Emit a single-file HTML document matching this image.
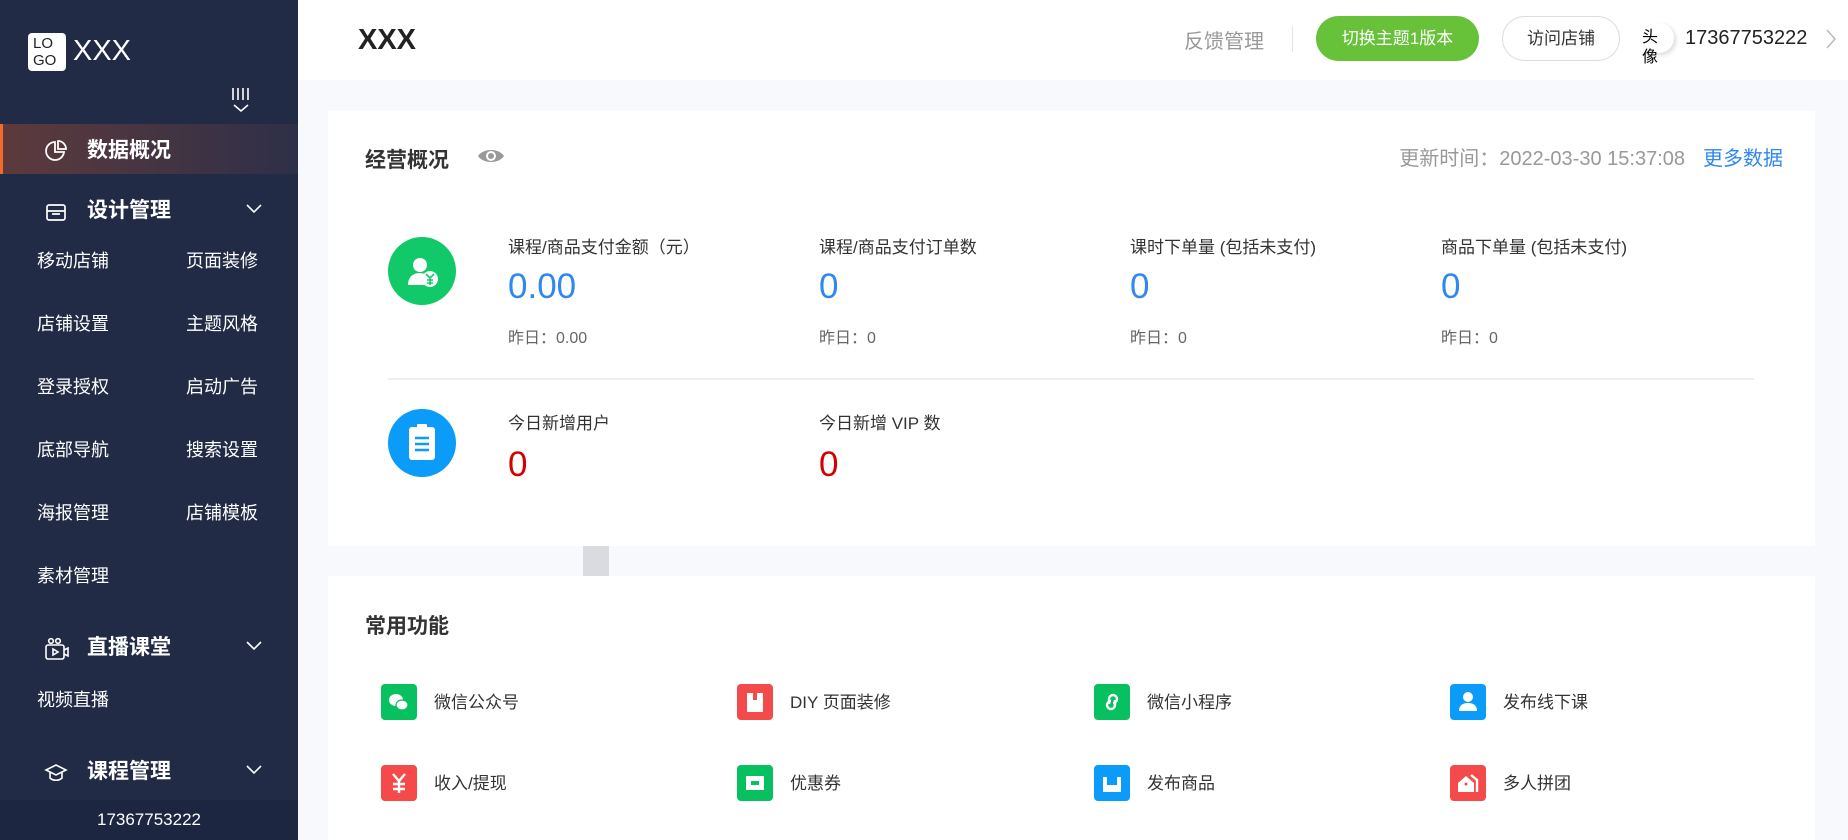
<!DOCTYPE html>
<html><head><meta charset="utf-8"><style>
*{margin:0;padding:0;box-sizing:border-box}
body{width:1848px;height:840px;overflow:hidden;background:#f8f9fd;font-family:"Liberation Sans","Noto Sans CJK SC",sans-serif;position:relative}
.abs{position:absolute}
#side{left:0;top:0;width:298px;height:840px;background:#212b45;color:#fff}
.logo{left:28px;top:33px;width:38px;height:38px;background:#fff;border-radius:4px;color:#222;font-size:15px;line-height:17px;padding:2px 0 0 5px;overflow:hidden}
.mi{left:0;width:298px;height:50px;font-size:21px;font-weight:bold;line-height:50px}
.mi .t{position:absolute;left:87px}
.mi svg.ic{position:absolute;left:44px;top:14px}
.mi .ch{position:absolute;right:36px;top:18px}
.sub{font-size:18px;color:#fff}
#hdr{left:298px;top:0;width:1550px;height:80px;background:#fff}
.card{background:#fff}
.lbl{font-size:17px;color:#333}
.val{font-size:35px;color:#2f88ef}
.yd{font-size:16px;color:#666}
.fi{width:36px;height:36px;border-radius:4px}
.ft{font-size:17px;color:#333}
</style></head><body>
<div id="side" class="abs">
 <div class="abs logo">LO<br>GO</div>
 <div class="abs" style="left:73px;top:35px;font-size:29px;">XXX</div>
 <svg class="abs" style="left:230px;top:86px" width="22" height="27" viewBox="0 0 22 27" fill="none" stroke="#fff" stroke-width="1.6"><path d="M3 2v12M8 2v12M13 2v12M18 2v12M4 19l7 6 7-6"/></svg>
 <div class="abs mi" style="top:124px;background:linear-gradient(90deg,#5d3a3c,#2e2f48);border-left:3px solid #f06a2c;line-height:54px">
  <svg class="ic" width="24" height="24" viewBox="0 0 24 24" fill="none" stroke="#fff" stroke-width="1.8" style="left:41px;top:15px"><path d="M11 3a9 9 0 1 0 9 10H11z"/><path d="M14 2v8h8a8 8 0 0 0-8-8z"/></svg>
  <span class="t" style="left:84px">数据概况</span></div>
 <div class="abs mi" style="top:186px">
  <svg class="ic" width="24" height="24" viewBox="0 0 24 24" fill="none" stroke="#fff" stroke-width="1.7"><rect x="3" y="5" width="18" height="15" rx="2"/><path d="M3 11h18M8 14h8"/></svg>
  <span class="t">设计管理</span>
  <svg class="ch" width="16" height="10" viewBox="0 0 16 10" fill="none" stroke="#fff" stroke-width="1.6"><path d="M1 1l7 7 7-7"/></svg></div>
 <div class="abs sub" style="left:37px;top:247px">移动店铺</div><div class="abs sub" style="left:186px;top:247px">页面装修</div>
 <div class="abs sub" style="left:37px;top:310px">店铺设置</div><div class="abs sub" style="left:186px;top:310px">主题风格</div>
 <div class="abs sub" style="left:37px;top:373px">登录授权</div><div class="abs sub" style="left:186px;top:373px">启动广告</div>
 <div class="abs sub" style="left:37px;top:436px">底部导航</div><div class="abs sub" style="left:186px;top:436px">搜索设置</div>
 <div class="abs sub" style="left:37px;top:499px">海报管理</div><div class="abs sub" style="left:186px;top:499px">店铺模板</div>
 <div class="abs sub" style="left:37px;top:562px">素材管理</div>
 <div class="abs mi" style="top:623px">
  <svg class="ic" width="26" height="24" viewBox="0 0 26 24" fill="none" stroke="#fff" stroke-width="1.6"><rect x="2" y="8" width="18" height="14" rx="2"/><circle cx="7" cy="4" r="2.3"/><circle cx="14" cy="4" r="2.3"/><path d="M9 12v6l5-3z M20 13l4-2v8l-4-2"/></svg>
  <span class="t">直播课堂</span>
  <svg class="ch" width="16" height="10" viewBox="0 0 16 10" fill="none" stroke="#fff" stroke-width="1.6"><path d="M1 1l7 7 7-7"/></svg></div>
 <div class="abs sub" style="left:37px;top:686px">视频直播</div>
 <div class="abs mi" style="top:747px">
  <svg class="ic" width="24" height="24" viewBox="0 0 24 24" fill="none" stroke="#fff" stroke-width="1.6"><path d="M2 9l10-5 10 5-10 5z M6 11v6c3 3 9 3 12 0v-6"/></svg>
  <span class="t">课程管理</span>
  <svg class="ch" width="16" height="10" viewBox="0 0 16 10" fill="none" stroke="#fff" stroke-width="1.6"><path d="M1 1l7 7 7-7"/></svg></div>
 <div class="abs" style="left:0;top:800px;width:298px;height:40px;background:#1d2640;text-align:center;line-height:40px;font-size:17px">17367753222</div>
</div>
<div id="hdr" class="abs">
 <div class="abs" style="left:60px;top:24px;font-size:29px;font-weight:bold;color:#222">XXX</div>
 <div class="abs" style="left:886px;top:25px;font-size:20px;color:#999">反馈管理</div>
 <div class="abs" style="left:994px;top:26px;width:1px;height:26px;background:#e5e5e5"></div>
 <div class="abs" style="left:1018px;top:16px;width:163px;height:45px;border-radius:23px;background:#67c23a;color:#fff;font-size:17px;text-align:center;line-height:45px">切换主题1版本</div>
 <div class="abs" style="left:1204px;top:16px;width:118px;height:45px;border-radius:23px;border:1px solid #ddd;color:#333;font-size:17px;text-align:center;line-height:43px">访问店铺</div>
 <div class="abs" style="left:1346px;top:23px;width:30px;height:30px;border-radius:50%;background:#fff;box-shadow:2px 2px 5px rgba(0,0,0,.15)"></div>
 <div class="abs" style="left:1344px;top:28px;font-size:16px;line-height:20px;color:#000;width:18px">头像</div>
 <div class="abs" style="left:1387px;top:27px;font-size:20px;color:#222">17367753222</div>
 <svg class="abs" style="left:1528px;top:29px" width="10" height="20" viewBox="0 0 10 20" fill="none" stroke="#bbb" stroke-width="1.5"><path d="M1 1l8 9-8 9"/></svg>
</div>
<div class="abs card" style="left:328px;top:111px;width:1487px;height:435px">
 <div class="abs" style="left:37px;top:33px;font-size:21px;font-weight:bold;color:#333">经营概况</div>
 <svg class="abs" style="left:149px;top:35px" width="28" height="20" viewBox="0 0 28 20"><path d="M1 10C6 2 22 2 27 10 22 18 6 18 1 10z" fill="#999"/><circle cx="14" cy="10" r="5" fill="#fff"/><circle cx="14" cy="10" r="3" fill="#999"/></svg>
 <div class="abs" style="right:130px;top:31px;font-size:20px;color:#999">更新时间：2022-03-30 15:37:08</div>
 <div class="abs" style="right:32px;top:31px;font-size:20px;color:#2f88ef">更多数据</div>
 <div class="abs" style="left:60px;top:126px;width:68px;height:68px;border-radius:50%;background:#12c96a"></div>
 <svg class="abs" style="left:60px;top:126px" width="68" height="68" viewBox="0 0 68 68"><circle cx="32" cy="28" r="7" fill="#fff"/><path d="M20 48c0-8 5-12 12-12 4 0 6 2 6 2v10z" fill="#fff"/><circle cx="42" cy="42" r="8" fill="#fff"/><path d="M38 37l4 4 4-4M42 41v7M39 43h6M39 46h6" stroke="#12c96a" stroke-width="1.6" fill="none"/></svg>
 <div class="abs lbl" style="left:180px;top:122px">课程/商品支付金额（元）</div>
 <div class="abs val" style="left:180px;top:156px">0.00</div>
 <div class="abs yd" style="left:180px;top:213px">昨日：0.00</div>
 <div class="abs lbl" style="left:491px;top:122px">课程/商品支付订单数</div>
 <div class="abs val" style="left:491px;top:156px">0</div>
 <div class="abs yd" style="left:491px;top:213px">昨日：0</div>
 <div class="abs lbl" style="left:802px;top:122px">课时下单量 (包括未支付)</div>
 <div class="abs val" style="left:802px;top:156px">0</div>
 <div class="abs yd" style="left:802px;top:213px">昨日：0</div>
 <div class="abs lbl" style="left:1113px;top:122px">商品下单量 (包括未支付)</div>
 <div class="abs val" style="left:1113px;top:156px">0</div>
 <div class="abs yd" style="left:1113px;top:213px">昨日：0</div>
 <div class="abs" style="left:60px;top:267px;width:1366px;height:2px;background:#eee"></div>
 <div class="abs" style="left:60px;top:298px;width:68px;height:68px;border-radius:50%;background:#0a9cf8"></div>
 <svg class="abs" style="left:60px;top:298px" width="68" height="68" viewBox="0 0 68 68"><rect x="21" y="18" width="26" height="33" rx="3" fill="#fff"/><rect x="29" y="15" width="10" height="5" rx="1" fill="#fff"/><path d="M27 29h14M27 35h14M27 41h14" stroke="#0a9cf8" stroke-width="2.4"/></svg>
 <div class="abs lbl" style="left:180px;top:298px">今日新增用户</div>
 <div class="abs val" style="left:180px;top:334px;color:#d40000">0</div>
 <div class="abs lbl" style="left:491px;top:298px">今日新增 VIP 数</div>
 <div class="abs val" style="left:491px;top:334px;color:#d40000">0</div>
</div>
<div class="abs" style="left:583px;top:546px;width:26px;height:30px;background:#d9dbe1"></div>
<div class="abs card" style="left:328px;top:576px;width:1487px;height:264px">
 <div class="abs" style="left:37px;top:34px;font-size:21px;font-weight:bold;color:#333">常用功能</div>
</div>
<div class="abs fi" style="left:381px;top:684px;background:#07c160"><svg width="36" height="36" viewBox="0 0 36 36"><ellipse cx="15" cy="16" rx="7" ry="6" fill="#fff"/><ellipse cx="21" cy="21" rx="6" ry="5" fill="#fff" stroke="#07c160" stroke-width="1.2"/></svg></div>
<div class="abs ft" style="left:434px;top:688px">微信公众号</div>
<div class="abs fi" style="left:737px;top:684px;background:#f44a4a"><svg width="36" height="36" viewBox="0 0 36 36"><rect x="10" y="9" width="16" height="19" fill="#fff"/><rect x="16" y="9" width="4" height="7" fill="#f44a4a"/></svg></div>
<div class="abs ft" style="left:790px;top:688px">DIY 页面装修</div>
<div class="abs fi" style="left:1094px;top:684px;background:#07c160"><svg width="36" height="36" viewBox="0 0 36 36" fill="none" stroke="#fff" stroke-width="2.4"><path d="M15 20v-5a4 4 0 1 1 4 4M21 16v5a4 4 0 1 1-4-4"/></svg></div>
<div class="abs ft" style="left:1147px;top:688px">微信小程序</div>
<div class="abs fi" style="left:1450px;top:684px;background:#0a9cf8"><svg width="36" height="36" viewBox="0 0 36 36" fill="#fff"><circle cx="18" cy="13" r="5"/><path d="M9 27c0-6 4-8 9-8s9 2 9 8z"/></svg></div>
<div class="abs ft" style="left:1503px;top:688px">发布线下课</div>
<div class="abs fi" style="left:381px;top:765px;background:#f44a4a"><svg width="36" height="36" viewBox="0 0 36 36" fill="none" stroke="#fff" stroke-width="2.4"><path d="M12 9l6 7 6-7M18 16v12M12 19h12M12 24h12"/></svg></div>
<div class="abs ft" style="left:434px;top:769px">收入/提现</div>
<div class="abs fi" style="left:737px;top:765px;background:#07c160"><svg width="36" height="36" viewBox="0 0 36 36"><rect x="9" y="11" width="18" height="14" fill="#fff"/><rect x="14" y="16" width="8" height="4" fill="#07c160"/></svg></div>
<div class="abs ft" style="left:790px;top:769px">优惠券</div>
<div class="abs fi" style="left:1094px;top:765px;background:#0a9cf8"><svg width="36" height="36" viewBox="0 0 36 36"><path d="M9 12h4v8h10v-8h4v15H9z" fill="#fff"/></svg></div>
<div class="abs ft" style="left:1147px;top:769px">发布商品</div>
<div class="abs fi" style="left:1450px;top:765px;background:#f44a4a"><svg width="36" height="36" viewBox="0 0 36 36"><path d="M8 18l8-7 8 7v9H8z" fill="#fff"/><circle cx="16" cy="19" r="1.5" fill="#f44a4a"/><path d="M21 10l6 5v12" stroke="#fff" stroke-width="2.4" fill="none"/></svg></div>
<div class="abs ft" style="left:1503px;top:769px">多人拼团</div>
</body></html>
